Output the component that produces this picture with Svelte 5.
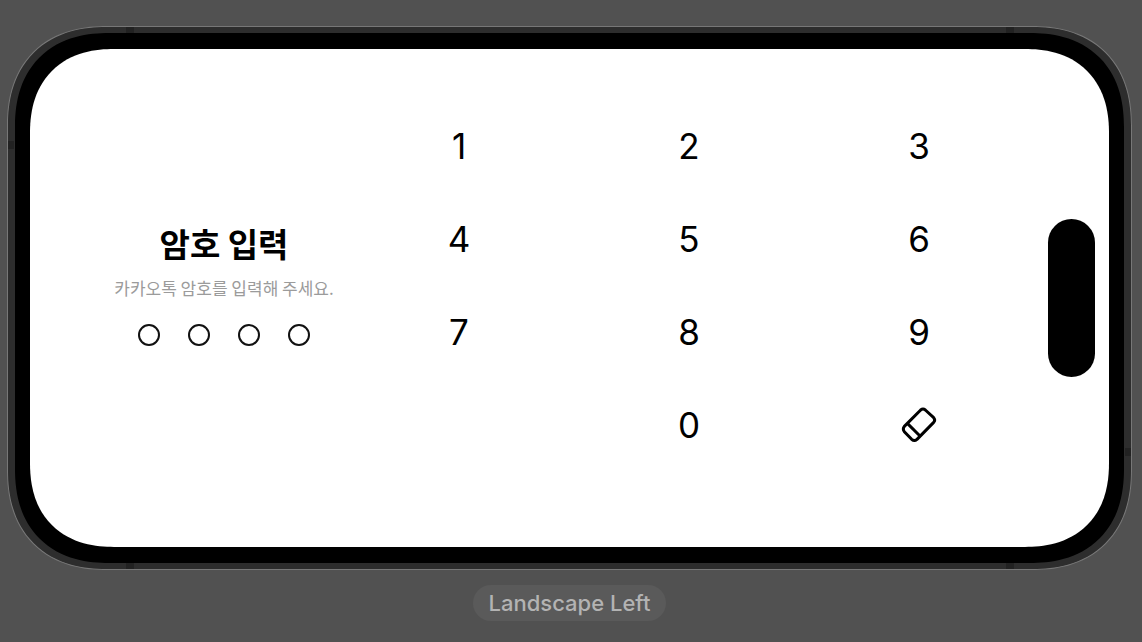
<script>
  const LENGTH = 4;
  const digits = [1, 2, 3, 4, 5, 6, 7, 8, 9];
  let code = $state('');

  function press(digit) {
    if (code.length < LENGTH) code += digit;
  }

  function erase() {
    code = code.slice(0, -1);
  }
</script>

<main>
  <div class="device">
    <span class="band top start"></span>
    <span class="band top end"></span>
    <span class="band bottom start"></span>
    <span class="band bottom end"></span>
    <span class="band left"></span>
    <span class="band right"></span>
    <div class="bezel">
      <div class="screen">
        <section class="prompt">
          <h1>암호 입력</h1>
          <p>카카오톡 암호를 입력해 주세요.</p>
          <div class="dots">
            {#each Array(LENGTH) as _, i}
              <span class="dot" class:filled={i < code.length}></span>
            {/each}
          </div>
        </section>
        <section class="keypad">
          {#each digits as digit}
            <button type="button" onclick={() => press(digit)}>{digit}</button>
          {/each}
          <button type="button" class="zero" onclick={() => press(0)}>0</button>
          <button type="button" aria-label="지우기" onclick={erase}>
            <svg viewBox="-2 -1 108 108" width="36" height="36" fill="none" stroke="currentColor" stroke-width="9" stroke-linejoin="round">
              <path d="M8 57 L57 8 Q64 2 71 8 L96 31 Q102 38 96 45 L46 96 Q38 103 30 96 L8 73 Q2 65 8 57 Z" />
              <path d="M17 48 L55 86" />
            </svg>
          </button>
        </section>
        <span class="island"></span>
      </div>
    </div>
  </div>
  <div class="caption">Landscape Left</div>
</main>

<style>
  :global(body) {
    margin: 0;
    background: #515151;
  }

  main {
    box-sizing: border-box;
    min-height: 100vh;
    padding: 26px 10px 20px 7px;
    display: flex;
    flex-direction: column;
    align-items: center;
    gap: 15px;
    font-family: Inter, sans-serif;
  }

  .device {
    position: relative;
    box-sizing: border-box;
    width: 100%;
    padding: 6px 7px;
    border: 1px solid #777;
    border-radius: 100px;
    corner-shape: superellipse(1.2);
    background: #2d2d2d;
  }

  .band {
    position: absolute;
    background: #222;
  }

  .top,
  .bottom {
    width: 8px;
    height: 6px;
  }

  .top { top: 0; }
  .bottom { bottom: 0; }
  .start { left: 118px; }
  .end { right: 117px; }

  .left,
  .right {
    width: 6px;
    height: 8px;
  }

  .left { left: 0; top: 114px; }
  .right { right: 0; bottom: 113px; }

  .bezel {
    position: relative;
    padding: 16px 15px;
    border-radius: 94px;
    corner-shape: superellipse(1.2);
    background: #000;
  }

  .screen {
    position: relative;
    display: grid;
    grid-template-columns: 240px 1fr;
    align-items: center;
    padding: 50px 75px 76px 74px;
    border-radius: 84px;
    corner-shape: superellipse(1.2);
    background: #fff;
    color: #000;
  }

  .prompt {
    display: flex;
    flex-direction: column;
    align-items: center;
    padding-bottom: 3px;
    text-align: center;
    white-space: nowrap;
    font-family: "Noto Sans CJK KR", sans-serif;
  }

  h1 {
    margin: 0;
    font-size: 33px;
    line-height: 44px;
    font-weight: 700;
  }

  p {
    margin: 9px 0 22px;
    font-size: 17px;
    line-height: 28px;
    color: #9b9b9b;
  }

  .dots {
    display: flex;
    gap: 28px;
  }

  .dot {
    box-sizing: border-box;
    width: 22px;
    height: 22px;
    border: 2px solid #111;
    border-radius: 50%;
  }

  .filled {
    background: #111;
  }

  .keypad {
    display: grid;
    grid-template-columns: repeat(3, 1fr);
    grid-auto-rows: 93px;
  }

  button {
    display: flex;
    align-items: center;
    justify-content: center;
    padding: 0;
    border: 0;
    background: none;
    color: #000;
    font: 400 35px/44px Inter, sans-serif;
    cursor: pointer;
  }

  .zero {
    grid-column: 2;
  }

  .island {
    position: absolute;
    right: 14px;
    top: 170px;
    width: 47px;
    height: 158px;
    border-radius: 24px;
    background: #000;
  }

  .caption {
    padding: 4px 16px;
    border-radius: 18px;
    background: #5a5a5a;
    color: #b3b3b3;
    font-size: 22px;
    line-height: 28px;
    font-weight: 500;
  }
</style>
